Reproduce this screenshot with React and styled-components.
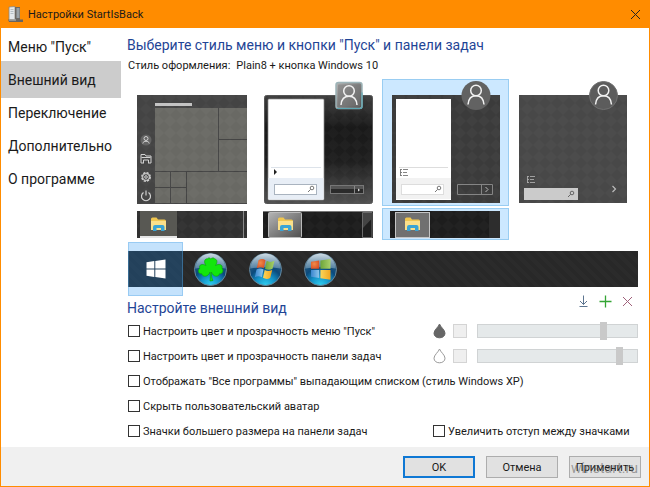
import { useState } from "react";
import styled, { createGlobalStyle, css } from "styled-components";

const GlobalStyle = createGlobalStyle`
  * {
    box-sizing: border-box;
  }

  body {
    margin: 0;
    background: #fff;
    color: #1a1a1a;
    font-family: Roboto, "Open Sans", sans-serif;
    font-size: 11px;
  }

  button, input {
    font: inherit;
    color: inherit;
  }
`;

const Window = styled.div`
  display: flex;
  flex-direction: column;
  min-height: 100vh;
  border: 1px solid #ff8c00;
  border-top: 0;
  background: #fff;
`;

const TitleBar = styled.header`
  display: flex;
  align-items: center;
  height: 28px;
  padding: 0 8px 0 6px;
  background: #ff8c00;
`;

const Title = styled.h1`
  flex: 1;
  margin: 0 0 0 4px;
  font-size: 11px;
  font-weight: 400;
`;

const PlainButton = styled.button`
  display: flex;
  align-items: center;
  justify-content: center;
  padding: 0;
  border: 0;
  background: none;
`;

const Body = styled.div`
  display: flex;
  flex: 1;
`;

const Sidebar = styled.nav`
  display: flex;
  flex-direction: column;
  flex: 0 0 120px;
`;

const NavItem = styled.button`
  height: 37px;
  margin-bottom: -4px;
  padding: 0 7px;
  border: 0;
  background: ${(p) => (p.$active ? "#cccccc" : "none")};
  font-size: 14px;
  text-align: left;
  white-space: nowrap;
`;

const Main = styled.main`
  flex: 1;
  min-width: 0;
  padding: 6px 11px 4px 7px;
`;

const Heading = styled.h2`
  margin: 0 0 0 -1px;
  color: #1f4596;
  font-size: 14px;
  font-weight: 400;
  line-height: 22px;
`;

const StyleLine = styled.p`
  display: flex;
  gap: 6px;
  margin: 1px 0 4px;
  line-height: 18px;
`;

const Previews = styled.div`
  display: flex;
  flex-wrap: wrap;
`;

const PreviewColumn = styled.div`
  display: flex;
  flex-direction: column;
  gap: 2px;
  width: 127px;
`;

const selected = css`
  background: #cce8ff;
  box-shadow: inset 0 0 0 1px #99cdf2;
`;

const PreviewButton = styled(PlainButton)`
  ${(p) => p.$active && selected}

  svg {
    display: block;
  }
`;

const OrbStrip = styled.div`
  display: flex;
  align-items: center;
  height: 36px;
  margin-top: 11px;
  background: repeating-linear-gradient(45deg, #2b2b2b 0 4px, #282828 4px 8px);
`;

const OrbButton = styled(PlainButton)`
  width: 55px;
  height: 54px;
  ${(p) =>
    p.$active &&
    css`
      background: rgba(18, 138, 242, 0.25);
      box-shadow: inset 0 0 0 1px rgba(90, 170, 230, 0.4);
    `}
`;

const SectionHead = styled.div`
  display: flex;
  align-items: flex-end;
  justify-content: space-between;
  height: 32px;
`;

const Actions = styled.div`
  display: flex;
  align-self: flex-start;
  padding-top: 3px;

  button {
    width: 22px;
    height: 22px;
  }
`;

const Options = styled.div`
  display: flex;
  flex-direction: column;
  gap: 1px;
`;

const OptionRow = styled.div`
  display: grid;
  grid-template-columns: ${(p) => (p.$wide ? "1fr" : "305px 1fr")};
  align-items: center;
  height: 24px;
`;

const CheckLabel = styled.label`
  display: flex;
  align-items: center;
  gap: 3px;
  white-space: nowrap;
`;

const Checkbox = styled.input`
  appearance: none;
  flex: none;
  width: 12px;
  height: 12px;
  margin: 0;
  border: 1px solid #333;
  background: #fff;

  &:checked {
    background: #333;
    box-shadow: inset 0 0 0 2px #fff;
  }
`;

const ColorControls = styled.div`
  display: flex;
  align-items: center;
`;

const Swatch = styled.button`
  width: 14px;
  height: 14px;
  margin: 0 10px 0 7px;
  padding: 0;
  border: 1px solid #d4d4d4;
  background: #efefef;
`;

const Slider = styled.input`
  appearance: none;
  flex: 1;
  min-width: 0;
  height: 14px;
  margin: 0;
  border-radius: 0;
  background: #e5e9ea;
  box-shadow: inset 0 0 0 1px #d0d3d4;

  &::-webkit-slider-thumb {
    appearance: none;
    width: 7px;
    height: 18px;
    border: 0;
    border-radius: 0;
    background: #c9c9c9;
  }
`;

const Footer = styled.footer`
  position: relative;
  display: flex;
  justify-content: flex-end;
  gap: 11px;
  padding: 9px 8px 8px;
  background: #f0f0f0;
`;

const DialogButton = styled.button`
  width: 72px;
  height: 22px;
  padding: 0;
  border: ${(p) => (p.$primary ? "2px solid #0f78d4" : "1px solid #adadad")};
  background: #e1e1e1;
`;

const Watermark = styled.span`
  position: absolute;
  right: 11px;
  bottom: 9px;
  color: rgba(90, 90, 90, 0.55);
  font-size: 14px;
  line-height: 18px;
  pointer-events: none;
`;

const pages = ['Меню "Пуск"', "Внешний вид", "Переключение", "Дополнительно", "О программе"];

function Defs() {
  return (
    <svg width="0" height="0" style={{ display: "block" }} aria-hidden="true">
      <defs>
        <pattern id="weave" width="12" height="12" patternUnits="userSpaceOnUse">
          <path d="M6 0 L12 6 L6 12 L0 6 Z" fill="#fff" opacity="0.025" />
        </pattern>
        <linearGradient id="glass" x1="0" y1="0" x2="0" y2="1">
          <stop offset="0" stopColor="#3d3d3d" />
          <stop offset="0.3" stopColor="#191919" />
          <stop offset="0.6" stopColor="#1e1e1e" />
          <stop offset="1" stopColor="#505050" />
        </linearGradient>
        <linearGradient id="chrome" x1="0" y1="0" x2="1" y2="1">
          <stop offset="0" stopColor="#b5b5b5" />
          <stop offset="0.45" stopColor="#858585" />
          <stop offset="1" stopColor="#505050" />
        </linearGradient>
        <radialGradient id="orb" cx="0.5" cy="1" r="0.9">
          <stop offset="0" stopColor="#2fd0f2" />
          <stop offset="0.35" stopColor="#1390c6" />
          <stop offset="0.62" stopColor="#0b4a7c" />
          <stop offset="1" stopColor="#35607f" />
        </radialGradient>
        <linearGradient id="shine" x1="0" y1="0" x2="0" y2="1">
          <stop offset="0" stopColor="#dfe9f0" stopOpacity="0.9" />
          <stop offset="1" stopColor="#8fb2c9" stopOpacity="0.5" />
        </linearGradient>
        <radialGradient id="flagRed" cx="0.4" cy="0.4" r="0.8">
          <stop offset="0" stopColor="#f08a4a" />
          <stop offset="1" stopColor="#d4431c" />
        </radialGradient>
        <linearGradient id="flagGreen">
          <stop offset="0" stopColor="#6ca53a" />
          <stop offset="1" stopColor="#a9d06a" />
        </linearGradient>
        <linearGradient id="flagBlue">
          <stop offset="0" stopColor="#3a86cf" />
          <stop offset="1" stopColor="#8cc6ec" />
        </linearGradient>
        <linearGradient id="flagYellow">
          <stop offset="0" stopColor="#fbd65a" />
          <stop offset="1" stopColor="#f2a51f" />
        </linearGradient>
      </defs>
    </svg>
  );
}

function Person({ x, y }) {
  return (
    <g transform={`translate(${x} ${y})`} fill="none" stroke="#f2f2f2" strokeWidth="1.5">
      <circle cx="0" cy="-4.5" r="5.3" />
      <path d="M-8 9.5 C-7.5 3.5 -4.5 0.8 0 0.8 C4.5 0.8 7.5 3.5 8 9.5" />
    </g>
  );
}

function Magnifier({ x, y, color = "#777" }) {
  return (
    <g transform={`translate(${x} ${y})`} fill="none" stroke={color} strokeWidth="1">
      <circle cx="1" cy="-1" r="1.8" />
      <path d="M-0.3 0.3 L-3 3" />
    </g>
  );
}

function ListMark({ x, y, color }) {
  return (
    <path
      d={`M${x + 0.5} ${y}v7 M${x} ${y + 0.5}h2 M${x} ${y + 3.5}h2 M${x} ${y + 6.5}h2 M${x + 3} ${y + 0.5}h5 M${x + 3} ${y + 3.5}h4 M${x + 3} ${y + 6.5}h5`}
      fill="none"
      stroke={color}
      strokeWidth="0.9"
    />
  );
}

function PreviewSvg({ height, children }) {
  return (
    <svg width="127" height={height} viewBox={`0 0 127 ${height}`} aria-hidden="true">
      {children}
    </svg>
  );
}

function Win10Menu() {
  return (
    <PreviewSvg height={127}>
      <rect x="9" y="16" width="110" height="109" fill="#444" />
      <rect x="27" y="24" width="37" height="3" fill="#c3c3c3" />
      <g fill="#696964">
        <rect x="27" y="29" width="63" height="63" />
        <rect x="91" y="29" width="28" height="31" />
        <rect x="91" y="61" width="28" height="31" />
        <rect x="27" y="93" width="15" height="15" />
        <rect x="43" y="93" width="15" height="15" />
        <rect x="27" y="109" width="15" height="15" />
        <rect x="43" y="109" width="15" height="15" />
        <rect x="59" y="93" width="60" height="31" />
      </g>
      <rect x="9" y="16" width="110" height="109" fill="url(#weave)" />
      <circle cx="18" cy="61" r="5.5" fill="#636363" />
      <g fill="none" stroke="#d2d2d2" strokeWidth="1">
        <circle cx="18" cy="59.5" r="2" />
        <path d="M14.8 64.5 C15 61.5 21 61.5 21.2 64.5" />
        <path d="M15 84 h-2 v-8.5 h4 l1 1.5 h5 v7 h-2 M15.5 84.5 v-3.5 h5 v3.5 M13.5 78.5 h9" />
        <circle cx="18" cy="98" r="4.2" strokeWidth="1.5" strokeDasharray="2.2 1.1" />
        <circle cx="18" cy="98" r="3.4" />
        <circle cx="18" cy="98" r="1.3" />
        <path d="M15.5 113.5 A4.5 4.5 0 1 0 20.5 113.5 M18 111.5 v5" strokeWidth="1.2" />
      </g>
    </PreviewSvg>
  );
}

function Win7Menu() {
  return (
    <PreviewSvg height={127}>
      <rect x="9.5" y="16.5" width="108" height="108" rx="2" fill="url(#glass)" stroke="#555" />
      <rect x="10" y="17" width="107" height="107" fill="url(#weave)" />
      <rect x="13" y="20" width="56" height="101" rx="1" fill="#fff" stroke="#8b8b8b" strokeWidth="0.7" />
      <rect x="13.5" y="99" width="55" height="21.5" fill="#e8eef6" />
      <path d="M16 88.5 h50" stroke="#dde3ea" />
      <path d="M19 90 l3 3 l-3 3 z" fill="#222" />
      <rect x="19.5" y="105.5" width="42" height="10" fill="#fff" stroke="#a9b3bf" />
      <Magnifier x={56} y={110} />
      <rect x="75.5" y="106.5" width="33" height="8" fill="#2b2b2b" stroke="#777" />
      <path d="M76 107 h32 v3 h-32z" fill="#555" />
      <path d="M99.5 107 v8" stroke="#888" />
      <path d="M103 109.5 l2 1.5 l-2 1.5z" fill="#ddd" />
      <rect x="81" y="3.5" width="26" height="26" rx="2.5" fill="url(#chrome)" stroke="#9db4b8" strokeWidth="1.5" />
      <path d="M82 29.5 h23 q2 0 2 -2 v-14" fill="none" stroke="#5ea7b3" strokeWidth="1.2" />
      <rect x="83" y="5.5" width="22" height="22" rx="1" fill="#777" opacity="0.5" />
      <Person x={94} y={16.5} />
    </PreviewSvg>
  );
}

function Plain8Menu() {
  return (
    <PreviewSvg height={127}>
      <rect x="10" y="16" width="108" height="108" fill="#3b3b3b" />
      <rect x="10" y="16" width="108" height="108" fill="url(#weave)" />
      <rect x="14" y="20" width="55" height="101" fill="#fff" />
      <rect x="14" y="99" width="55" height="21" fill="#f2f2f2" />
      <path d="M17 88.5 h49" stroke="#ddd" />
      <ListMark x={18} y={90} color="#777" />
      <rect x="19.5" y="105.5" width="42" height="10" fill="#fff" stroke="#ddd" />
      <Magnifier x={56} y={110} />
      <path d="M75.5 105.5 h35 v10 h-35z M99.5 105.5 v10" fill="none" stroke="#858585" />
      <path d="M103.5 108 l2.5 2.5 l-2.5 2.5" fill="none" stroke="#bbb" />
      <circle cx="94" cy="16.5" r="14.5" fill="#626262" />
      <Person x={94} y={16} />
    </PreviewSvg>
  );
}

function Plain10Menu() {
  return (
    <PreviewSvg height={127}>
      <rect x="10" y="16" width="108" height="108" fill="#484848" />
      <rect x="10" y="16" width="108" height="108" fill="url(#weave)" />
      <ListMark x={18} y={97} color="#aaa" />
      <rect x="15" y="109" width="54" height="12" fill="#cbcbcb" />
      <Magnifier x={62} y={115} color="#666" />
      <path d="M103.5 107 l3 3 l-3 3" fill="none" stroke="#bbb" strokeWidth="1.2" />
      <circle cx="94.5" cy="16.5" r="14" fill="#5c5c5c" stroke="#707070" />
      <Person x={94.5} y={16} />
    </PreviewSvg>
  );
}

function Folder() {
  return (
    <g>
      <path d="M23 11 q0 -1.5 1.5 -1.5 h4 l1.5 2 h6.5 q1.5 0 1.5 1.5 v9 h-15z" fill="#f0c650" />
      <path d="M23 13 h15 v9 h-15z" fill="#fbe08a" />
      <path d="M25 23 v-4 q0 -2 2 -2 h7.5 q2 0 2 2 v4 h-3.5 v-3 h-4.5 v3z" fill="#3aa4d4" />
    </g>
  );
}

function Win10Bar() {
  return (
    <PreviewSvg height={32}>
      <rect x="9" y="3" width="110" height="27" fill="#303030" />
      <rect x="9" y="3" width="110" height="27" fill="url(#weave)" />
      <rect x="12" y="3" width="37" height="27" fill="#585853" />
      <rect x="12" y="28" width="37" height="2" fill="#e6e6e6" />
      <path d="M115.5 3 v27" stroke="#888" />
      <Folder />
    </PreviewSvg>
  );
}

function Win7Bar() {
  return (
    <PreviewSvg height={32}>
      <rect x="8" y="3" width="110" height="27" fill="#1c1c1c" />
      <rect x="8" y="3" width="110" height="27" fill="url(#weave)" />
      <path d="M8 3.5 h110" stroke="#777" />
      <rect x="13.5" y="4.5" width="33" height="25" rx="1" fill="url(#chrome)" stroke="#bbb" />
      <path d="M107.5 4.5 h9.5 v25 h-9.5z" fill="#1f1f1f" stroke="#6a6a6a" />
      <path d="M108 5 h8.5 v6 l-8.5 9z" fill="#444" />
      <Folder />
    </PreviewSvg>
  );
}

function Plain8Bar() {
  return (
    <PreviewSvg height={32}>
      <rect x="8" y="3" width="110" height="27" fill="#1d1d1d" />
      <rect x="8" y="3" width="110" height="27" fill="url(#weave)" />
      <rect x="107" y="3" width="11" height="27" fill="#2d2d2d" />
      <rect x="13.5" y="4.5" width="34" height="25" fill="#707070" stroke="#c5c5c5" />
      <Folder />
    </PreviewSvg>
  );
}

function Orb({ children }) {
  return (
    <svg width="35" height="35" viewBox="0 0 35 35" aria-hidden="true">
      <circle cx="17.5" cy="17.5" r="16" fill="url(#orb)" stroke="#66869a" strokeWidth="1" />
      <path d="M2.5 16.5 A15 15 0 0 1 32.5 16.5 Q17.5 14 2.5 16.5z" fill="url(#shine)" />
      {children}
    </svg>
  );
}

function WindowsLogo() {
  return (
    <svg width="20" height="20" viewBox="0 0 20 20" fill="#fff" aria-hidden="true">
      <path d="M0.5 3.2 L8.3 2.1 V9.5 H0.5z M9.3 2 L19.5 0.5 V9.5 H9.3z M0.5 10.5 H8.3 V17.9 L0.5 16.8z M9.3 10.5 H19.5 V19.5 L9.3 18z" />
    </svg>
  );
}

function CloverOrb() {
  return (
    <Orb>
      <path
        d="M17 20 C15.5 25 9.5 25.5 8.8 21.8 C5 22 4.5 18 6.8 16.2 C5.5 12.5 9.5 11.5 13 13.5 C10.5 10 11.5 6.5 14.5 6.8 C15.5 5.5 17 5.8 17.8 7 C19 5.5 21 5.5 21.8 7 C24.5 7.5 24.5 10.5 22.5 13.5 C26 11.5 30 12.5 29 16.2 C31 18.5 29.5 22 26.5 21.8 C25.5 25.500 20 25 18.4 20 C18.3 23.500 18.6 25.500 20 28.5 L17 29 C17.4 26 17.5 23.500 17 20z"
        fill="#12e60c"
        stroke="#0ca808"
        strokeWidth="0.7"
      />
    </Orb>
  );
}

function WavyOrb() {
  return (
    <Orb>
      <path d="M10.5 8.2 Q14 6 17.5 8.2 L15.8 16.2 Q12.5 14.2 8.8 16.2z" fill="url(#flagRed)" />
      <path d="M18.7 8.8 Q22 11 26.5 8.8 L24.5 16.8 Q21 18.8 17 16.8z" fill="url(#flagGreen)" />
      <path d="M8.5 17.5 Q12 15.5 15.5 17.5 L13.8 25.2 Q10.5 23.2 6.8 25.2z" fill="url(#flagBlue)" />
      <path d="M16.7 18 Q20 20 24.2 18 L22.2 26 Q18.5 28 15 25.8z" fill="url(#flagYellow)" />
    </Orb>
  );
}

function FlatOrb() {
  return (
    <Orb>
      <path d="M8 9.8 L16.2 8.6 V16.8 H8z" fill="url(#flagRed)" />
      <path d="M17.4 8.4 L27.5 7 V16.8 H17.4z" fill="url(#flagGreen)" />
      <path d="M8 18 H16.2 V26 L8 24.8z" fill="url(#flagBlue)" />
      <path d="M17.4 18 H27.5 V27.8 L17.4 26.3z" fill="url(#flagYellow)" />
    </Orb>
  );
}

function Drop({ filled }) {
  return (
    <svg width="13" height="16" viewBox="0 0 13 16" aria-hidden="true">
      <path
        d="M6.5 1 C5.5 4 1 7 1 10.2 C1 13 3.3 14.8 6.5 14.8 C9.7 14.8 12 13 12 10.2 C12 7 7.5 4 6.5 1z"
        fill={filled ? "#666" : "#fff"}
        stroke={filled ? "#666" : "#999"}
      />
    </svg>
  );
}

function AppIcon() {
  return (
    <svg width="17" height="17" viewBox="0 0 17 17" aria-hidden="true">
      <path d="M2 1 L8 0.5 V14 L2 13.5z" fill="#e4e8ea" stroke="#8d8778" strokeWidth="0.8" />
      <path d="M3.5 3.5 h3 M3.5 5.5 h3 M3.5 7.5 h3" stroke="#a8b4ba" strokeWidth="0.8" />
      <path d="M8 1 h5 v13 h-5z" fill="#6c6862" />
      <path d="M9.5 2 h3 v10 h-3z" fill="#98a1a6" />
      <path d="M1 13.5 h15 v2.5 h-14z" fill="#69645f" />
      <path d="M2 13.5 h7 v1 h-7z" fill="#b9c0c4" />
    </svg>
  );
}

const themes = [
  { name: "Windows 10", Menu: Win10Menu, Bar: Win10Bar },
  { name: "Windows 7", Menu: Win7Menu, Bar: Win7Bar },
  { name: "Plain8", Menu: Plain8Menu, Bar: Plain8Bar },
  { name: "Plain10", Menu: Plain10Menu },
];

const orbs = [
  { name: "Windows 10", Icon: WindowsLogo },
  { name: "StartIsBack", Icon: CloverOrb },
  { name: "Windows 7", Icon: WavyOrb },
  { name: "Windows 8", Icon: FlatOrb },
];

function Check({ children }) {
  return (
    <CheckLabel>
      <Checkbox type="checkbox" />
      {children}
    </CheckLabel>
  );
}

function ColorPicker({ label, value, filled }) {
  return (
    <ColorControls>
      <Drop filled={filled} />
      <Swatch aria-label={`Цвет: ${label}`} />
      <Slider type="range" min="0" max="100" defaultValue={value} aria-label={`Прозрачность: ${label}`} />
    </ColorControls>
  );
}

function App() {
  const [page, setPage] = useState(1);
  const [menu, setMenu] = useState(2);
  const [bar, setBar] = useState(2);
  const [orb, setOrb] = useState(0);

  return (
    <>
      <GlobalStyle />
      <Window>
        <Defs />
        <TitleBar>
          <AppIcon />
          <Title>Настройки StartIsBack</Title>
          <PlainButton aria-label="Закрыть">
            <svg width="11" height="11" viewBox="0 0 11 11" stroke="#222" fill="none" aria-hidden="true">
              <path d="M1 1 L10 10 M10 1 L1 10" />
            </svg>
          </PlainButton>
        </TitleBar>

        <Body>
          <Sidebar>
            {pages.map((name, i) => (
              <NavItem key={name} $active={i === page} onClick={() => setPage(i)}>
                {name}
              </NavItem>
            ))}
          </Sidebar>

          <Main>
            <Heading>Выберите стиль меню и кнопки "Пуск" и панели задач</Heading>
            <StyleLine>
              <span>Стиль оформления:</span>
              <span>Plain8 + кнопка Windows 10</span>
            </StyleLine>

            <Previews>
              {themes.map(({ name, Menu, Bar }, i) => (
                <PreviewColumn key={name}>
                  <PreviewButton aria-label={`Меню ${name}`} $active={i === menu} onClick={() => setMenu(i)}>
                    <Menu />
                  </PreviewButton>
                  {Bar && (
                    <PreviewButton aria-label={`Панель ${name}`} $active={i === bar} onClick={() => setBar(i)}>
                      <Bar />
                    </PreviewButton>
                  )}
                </PreviewColumn>
              ))}
            </Previews>

            <OrbStrip>
              {orbs.map(({ name, Icon }, i) => (
                <OrbButton key={name} aria-label={`Кнопка ${name}`} $active={i === orb} onClick={() => setOrb(i)}>
                  <Icon />
                </OrbButton>
              ))}
            </OrbStrip>

            <SectionHead>
              <Heading>Настройте внешний вид</Heading>
              <Actions>
                <PlainButton aria-label="Загрузить">
                  <svg width="13" height="13" viewBox="0 0 13 13" stroke="#5d7590" fill="none" aria-hidden="true">
                    <path d="M6.5 0.5 V9.5 M3 6 L6.5 9.5 L10 6 M2.5 11.5 H10.5" />
                  </svg>
                </PlainButton>
                <PlainButton aria-label="Добавить">
                  <svg width="13" height="13" viewBox="0 0 13 13" stroke="#35a535" fill="none" aria-hidden="true">
                    <path d="M6.5 0.5 V12.5 M0.5 6.5 H12.5" strokeWidth="1.3" />
                  </svg>
                </PlainButton>
                <PlainButton aria-label="Удалить">
                  <svg width="11" height="11" viewBox="0 0 11 11" stroke="#a0607a" fill="none" aria-hidden="true">
                    <path d="M1 1 L10 10 M10 1 L1 10" />
                  </svg>
                </PlainButton>
              </Actions>
            </SectionHead>

            <Options>
              <OptionRow>
                <Check>Настроить цвет и прозрачность меню "Пуск"</Check>
                <ColorPicker label="меню" value={80} filled />
              </OptionRow>
              <OptionRow>
                <Check>Настроить цвет и прозрачность панели задач</Check>
                <ColorPicker label="панель задач" value={90} />
              </OptionRow>
              <OptionRow $wide>
                <Check>Отображать "Все программы" выпадающим списком (стиль Windows XP)</Check>
              </OptionRow>
              <OptionRow $wide>
                <Check>Скрыть пользовательский аватар</Check>
              </OptionRow>
              <OptionRow>
                <Check>Значки большего размера на панели задач</Check>
                <Check>Увеличить отступ между значками</Check>
              </OptionRow>
            </Options>
          </Main>
        </Body>

        <Footer>
          <DialogButton $primary>OK</DialogButton>
          <DialogButton>Отмена</DialogButton>
          <DialogButton>Применить</DialogButton>
          <Watermark>winstart.ru</Watermark>
        </Footer>
      </Window>
    </>
  );
}

export default App;
